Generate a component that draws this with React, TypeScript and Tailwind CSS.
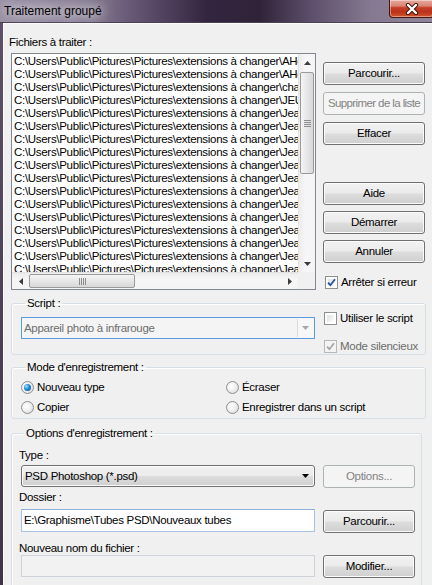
import React from "react";

const tails = [
  "AHdesign.jpg",
  "AHdesign2.jpg",
  "chats.jpg",
  "JEUX.jpg",
  "Jeanne.jpg",
  "Jeanne2.jpg",
  "Jeanne3.jpg",
  "Jeanne4.jpg",
  "Jeanne5.jpg",
  "Jeanne6.jpg",
  "Jeanne7.jpg",
  "Jeanne8.jpg",
  "Jeanne9.jpg",
  "Jeanne10.jpg",
  "Jeanne11.jpg",
  "Jeanne12.jpg",
  "Jeanne13.jpg",
];

function Button({ children, disabled, className = "" }: { children: React.ReactNode; disabled?: boolean; className?: string }) {
  const look = disabled
    ? "border-[#adb2b5] bg-[#f4f4f4] text-[#838383]"
    : "border-[#707070] bg-[linear-gradient(#f2f2f2_0%,#ebebeb_48%,#dddddd_52%,#cfcfcf_100%)] shadow-[inset_0_0_0_1px_#fbfbfb]";
  return (
    <div className={`h-[23px] flex items-center justify-center rounded-[3px] border ${look} ${className}`}>
      {children}
    </div>
  );
}

function Checkbox({ checked, disabled }: { checked?: boolean; disabled?: boolean }) {
  return (
    <span
      className={`w-[13px] h-[13px] shrink-0 border flex items-center justify-center ${
        disabled
          ? "border-[#b8b8b8] bg-[#f4f4f4]"
          : "border-[#8e8f8f] bg-[linear-gradient(135deg,#d6d9de_0%,#f7f7f7_70%,#ffffff_100%)] shadow-[inset_0_0_0_2px_#fff]"
      }`}
    >
      {checked && (
        <svg width="9" height="9" viewBox="0 0 9 9">
          <path
            d="M1 4.6 L3.4 7.2 L8 1.2"
            fill="none"
            stroke={disabled ? "#a6a6a6" : "#2b4f94"}
            strokeWidth="1.8"
          />
        </svg>
      )}
    </span>
  );
}

function Radio({ checked }: { checked?: boolean }) {
  return (
    <span className="w-[13px] h-[13px] shrink-0 rounded-full border border-[#8e8f8f] bg-[radial-gradient(circle_at_40%_40%,#ffffff_0%,#f0f0f0_45%,#cfd2d6_100%)] flex items-center justify-center">
      {checked && (
        <span className="w-[7px] h-[7px] rounded-full bg-[radial-gradient(circle_at_35%_35%,#9fe0ff_0%,#1a8ad6_45%,#0c4f8e_100%)]" />
      )}
    </span>
  );
}

function Arrow({ dir, color = "#3c3c3c" }: { dir: "up" | "down" | "left" | "right"; color?: string }) {
  const d = {
    up: "M0 4 L3.5 0 L7 4 Z",
    down: "M0 0 L7 0 L3.5 4 Z",
    left: "M4 0 L4 7 L0 3.5 Z",
    right: "M0 0 L0 7 L4 3.5 Z",
  }[dir];
  const vertical = dir === "up" || dir === "down";
  return (
    <svg width={vertical ? 7 : 4} height={vertical ? 4 : 7} viewBox={vertical ? "0 0 7 4" : "0 0 4 7"}>
      <path d={d} fill={color} />
    </svg>
  );
}

function ListBox() {
  return (
    <div className="w-[305px] h-[237px] shrink-0 border border-[#828790] bg-white grid grid-cols-[286px_17px] grid-rows-[218px_17px]">
      <div className="overflow-hidden pl-[2px] pt-[1px]">
        {tails.map((t, i) => (
          <div key={i} className="h-[13px] leading-[13px] whitespace-nowrap">
            {"C:\\Users\\Public\\Pictures\\Pictures\\extensions à changer\\" + t}
          </div>
        ))}
      </div>
      {/* vertical scrollbar */}
      <div className="flex flex-col border-l border-[#e3e3e3] bg-[linear-gradient(90deg,#ececec,#f6f6f6_40%,#f4f4f4)]">
        <div className="h-[17px] flex items-center justify-center">
          <Arrow dir="up" />
        </div>
        <div className="mt-[1px] mx-[1px] h-[102px] rounded-[2px] border border-[#9a9a9a] bg-[linear-gradient(90deg,#f5f5f5,#e6e6e6_50%,#d8d8d8)] flex flex-col items-center justify-center gap-[1px]">
          <span className="w-[7px] h-[1px] bg-[#8c8c8c]" />
          <span className="w-[7px] h-[1px] bg-[#8c8c8c]" />
          <span className="w-[7px] h-[1px] bg-[#8c8c8c]" />
          <span className="w-[7px] h-[1px] bg-[#8c8c8c]" />
        </div>
        <div className="flex-1" />
        <div className="h-[17px] flex items-center justify-center">
          <Arrow dir="down" />
        </div>
      </div>
      {/* horizontal scrollbar */}
      <div className="flex border-t border-[#e3e3e3] bg-[linear-gradient(#ececec,#f6f6f6_40%,#f4f4f4)]">
        <div className="w-[17px] flex items-center justify-center">
          <Arrow dir="left" />
        </div>
        <div className="my-[1px] w-[106px] rounded-[2px] border border-[#9a9a9a] bg-[linear-gradient(#f5f5f5,#e6e6e6_50%,#d8d8d8)] flex items-center justify-center gap-[1px]">
          <span className="w-[1px] h-[7px] bg-[#8c8c8c]" />
          <span className="w-[1px] h-[7px] bg-[#8c8c8c]" />
          <span className="w-[1px] h-[7px] bg-[#8c8c8c]" />
          <span className="w-[1px] h-[7px] bg-[#8c8c8c]" />
        </div>
        <div className="flex-1" />
        <div className="w-[17px] flex items-center justify-center">
          <Arrow dir="right" />
        </div>
      </div>
      <div className="bg-[#f0f0f0]" />
    </div>
  );
}

export default function App() {
  return (
    <div className="w-[432px] h-[585px] overflow-hidden flex flex-col font-['Liberation_Sans',Arial,sans-serif] text-[11.5px] tracking-[-0.3px] text-black leading-[13px]">
      {/* title bar */}
      <div className="h-[23px] shrink-0 flex items-start border-b border-[#4a3f53] bg-[linear-gradient(90deg,#9a91a5_0%,#8d8299_18%,#5f506e_33%,#33253f_48%,#2f2339_60%,#5d4f6b_72%,#857a91_86%,#8e8599_100%)]">
        <div className="pl-[4px] pt-[5px] text-[12px] tracking-normal [text-shadow:0_0_8px_rgba(255,255,255,0.95),0_0_16px_rgba(255,255,255,0.8),0_0_24px_rgba(255,255,255,0.6)]">
          Traitement groupé
        </div>
        <div className="ml-auto -mr-[2px] w-[45px] h-[18px] shrink-0 rounded-b-[4px] border border-t-0 border-[#47150c] bg-[linear-gradient(#e6aa9e_0%,#d98473_35%,#c4402a_45%,#b93219_70%,#d2552f_100%)] shadow-[inset_0_0_0_1px_rgba(255,255,255,0.4)] flex items-center justify-center">
          <svg width="14" height="12" viewBox="0 0 14 12">
            <path d="M3 2 L11 10 M11 2 L3 10" stroke="#3a1008" strokeWidth="4.2" strokeLinecap="round" />
            <path d="M3 2 L11 10 M11 2 L3 10" stroke="#ffffff" strokeWidth="2.4" strokeLinecap="round" />
          </svg>
        </div>
      </div>

      <div className="flex flex-1 min-h-0">
        <div className="w-[3px] shrink-0 bg-[linear-gradient(#5d5068,#3f3449)]" />
        <div className="flex-1 min-w-0 flex flex-col bg-[#f0f0f0] border-t border-l border-[#fcfcfc]">
          <div className="mt-[12px] ml-[5px] h-[13px]">Fichiers à traiter :</div>

          <div className="flex mt-[4px] ml-[7px]">
            <ListBox />
            <div className="ml-[7px] w-[102px] flex flex-col pt-[9px]">
              <Button>Parcourir...</Button>
              <Button disabled className="mt-[7px] tracking-[-0.6px]">
                Supprimer de la liste
              </Button>
              <Button className="mt-[7px]">Effacer</Button>
              <Button className="mt-[37px]">Aide</Button>
              <Button className="mt-[6px]">Démarrer</Button>
              <Button className="mt-[6px]">Annuler</Button>
              <div className="mt-[11px] ml-[2px] h-[16px] flex items-center gap-[3px]">
                <Checkbox checked />
                <span>Arrêter si erreur</span>
              </div>
            </div>
          </div>

          {/* Script */}
          <fieldset className="mt-[7px] ml-[7px] w-[415px] border border-[#d5dfe5] rounded-[3px] shadow-[inset_1px_1px_0_#fff] pl-[9px]">
            <legend className="ml-[4px] px-[2px] h-[13px] leading-[13px]">Script :</legend>
            <div className="flex">
              <div className="mt-[7px] w-[294px] h-[22px] border border-[#5b9be0] bg-[#f4f4f4] flex items-center">
                <span className="flex-1 pl-[2px] text-[#6d6d6d] whitespace-nowrap">Appareil photo à infrarouge</span>
                <span className="w-[16px] h-[18px] mr-[1px] border-l border-[#dcdcdc] bg-[#f7f7f7] flex items-center justify-center">
                  <Arrow dir="down" color="#a8a8a8" />
                </span>
              </div>
              <div className="ml-[9px] flex flex-col">
                <div className="h-[16px] flex items-center gap-[3px]">
                  <Checkbox />
                  <span>Utiliser le script</span>
                </div>
                <div className="mt-[12px] h-[16px] flex items-center gap-[3px]">
                  <Checkbox checked disabled />
                  <span className="text-[#6d6d6d]">Mode silencieux</span>
                </div>
              </div>
            </div>
          </fieldset>

          {/* Mode d'enregistrement */}
          <fieldset className="mt-[6px] ml-[7px] w-[415px] border border-[#d5dfe5] rounded-[3px] shadow-[inset_1px_1px_0_#fff] pl-[9px] pb-[3px]">
            <legend className="ml-[4px] px-[2px] h-[13px] leading-[13px]">Mode d'enregistrement :</legend>
            <div className="pt-[5px] grid grid-cols-[205px_auto] gap-y-[4px]">
              <div className="h-[16px] flex items-center gap-[3px]">
                <Radio checked />
                <span>Nouveau type</span>
              </div>
              <div className="h-[16px] flex items-center gap-[3px]">
                <Radio />
                <span>Écraser</span>
              </div>
              <div className="h-[16px] flex items-center gap-[3px]">
                <Radio />
                <span>Copier</span>
              </div>
              <div className="h-[16px] flex items-center gap-[3px]">
                <Radio />
                <span>Enregistrer dans un script</span>
              </div>
            </div>
          </fieldset>

          {/* Options d'enregistrement */}
          <fieldset className="mt-[8px] ml-[7px] w-[411px] border border-[#d5dfe5] rounded-[3px] shadow-[inset_1px_1px_0_#fff] pl-[7px] pb-[10px]">
            <legend className="ml-[5px] px-[2px] h-[13px] leading-[13px]">Options d'enregistrement :</legend>
            <div className="pt-[9px] h-[22px]">Type :</div>
            <div className="mt-[3px] ml-[2px] flex items-start">
              <div className="w-[294px] h-[22px] rounded-[3px] border border-[#707070] bg-[linear-gradient(#f2f2f2_0%,#ebebeb_48%,#dddddd_52%,#cfcfcf_100%)] shadow-[inset_0_0_0_1px_#fbfbfb] flex items-center">
                <span className="flex-1 pl-[3px] whitespace-nowrap">PSD Photoshop (*.psd)</span>
                <span className="mr-[5px] flex">
                  <Arrow dir="down" color="#000" />
                </span>
              </div>
              <Button disabled className="ml-[8px] w-[92px]">
                Options...
              </Button>
            </div>
            <div className="mt-[3px] h-[13px]">Dossier :</div>
            <div className="mt-[5px] ml-[2px] flex items-start">
              <div className="w-[294px] h-[23px] border border-[#a9c4e2] border-t-[#8fb0d6] bg-white flex items-center pl-[2px] whitespace-nowrap">
                E:\Graphisme\Tubes PSD\Nouveaux tubes
              </div>
              <Button className="ml-[8px] mt-[1px] w-[92px]">Parcourir...</Button>
            </div>
            <div className="mt-[9px] h-[13px]">Nouveau nom du fichier :</div>
            <div className="ml-[2px] flex items-start">
              <div className="w-[294px] h-[22px] border border-[#cdd3d9] bg-[#f2f2f2]" />
              <Button className="ml-[8px] w-[92px]">Modifier...</Button>
            </div>
          </fieldset>
        </div>
      </div>
    </div>
  );
}
